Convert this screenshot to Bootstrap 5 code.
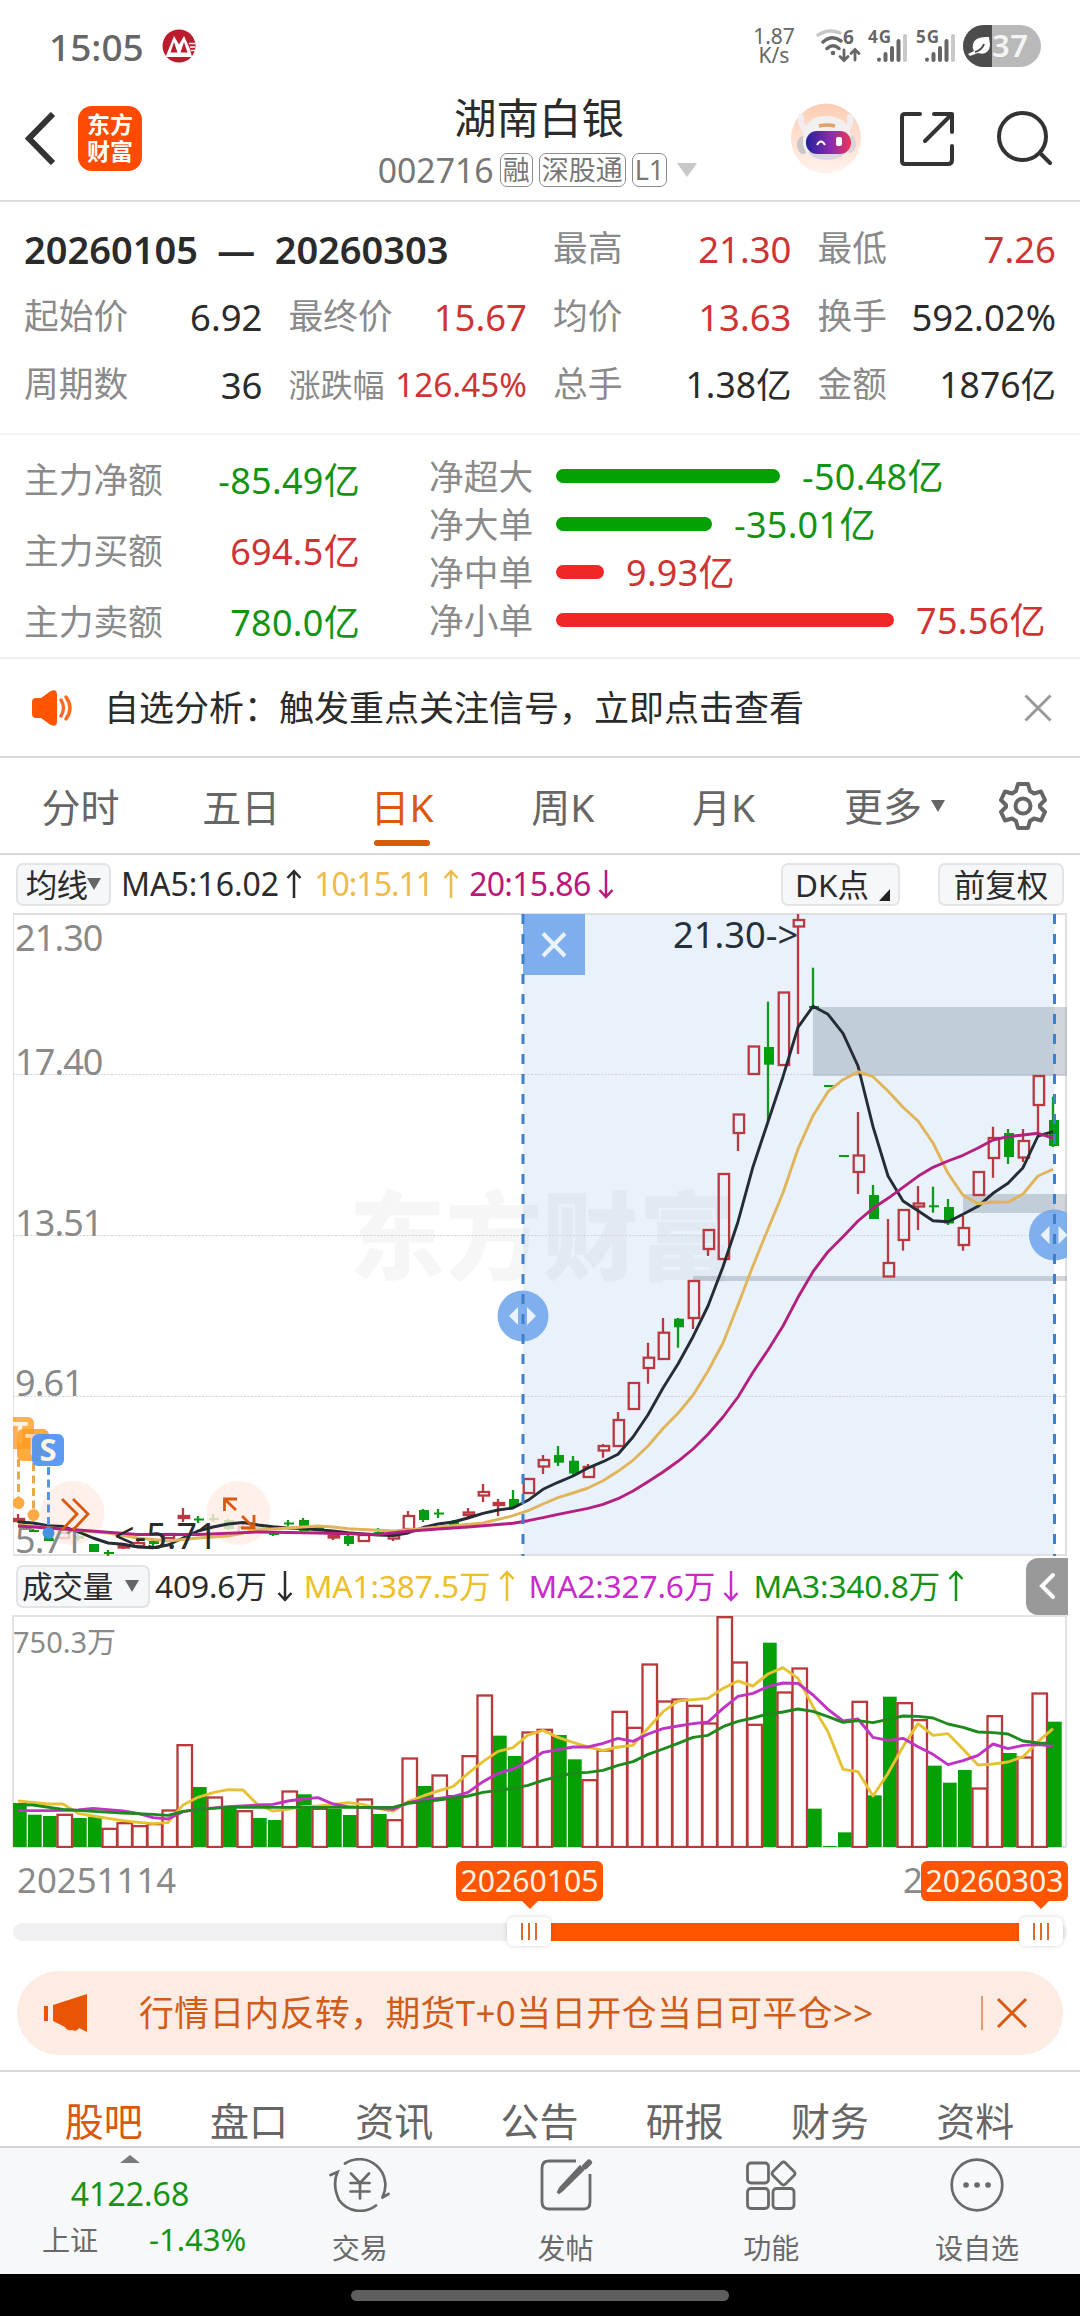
<!DOCTYPE html>
<html lang="zh-CN">
<head>
<meta charset="utf-8">
<meta name="viewport" content="width=device-width, initial-scale=1">
<title>湖南白银 002716</title>
<link href="https://cdn.jsdelivr.net/npm/bootstrap@5.3.0/dist/css/bootstrap.min.css" rel="stylesheet">
<style>
:root{--up:#cf3434;--down:#149414;--accent:#d9590f;--ink:#2b2b2b;--dim:#8a8a8a;--mid:#666}
body{font-family:"Noto Sans","Noto Sans CJK SC",sans-serif;color:var(--ink);background:#fff;width:1080px;margin:0;line-height:1;overflow-x:hidden}
svg{display:block;flex:none}
svg text{font-family:"Noto Sans","Noto Sans CJK SC",sans-serif}
.up{color:var(--up)}.down{color:var(--down)}
.nw{white-space:nowrap}
.statusbar{height:95px;padding:0 18px 3px 49px}
.clock{font-size:37px;color:#666;font-weight:500}
.netspeed{font-size:21px;line-height:19px;color:#666;text-align:center;width:42px}
.topnav{height:107px;border-bottom:2px solid #dcdcdc;padding:0 27px 0 25px}
.side{width:310px}
.applogo{width:64px;height:65px;border-radius:14px;background:#ff4a00;color:#fff;font-weight:700;font-size:23px;line-height:27px}
.stockname{font-size:42.500px;line-height:50px;margin-bottom:9px}
.code{font-size:33.800px;line-height:36px;color:#777}
.tagbox{border:1.5px solid #8c8c8c;border-radius:7px;font-size:27px;line-height:31px;color:#777;padding:0 2px;height:34px}
.tri{width:0;height:0;border:10.5px solid transparent;border-top:14px solid #c8c8c8;border-bottom:0}
.stats{height:233px;padding:13px 24px 0 24px;border-bottom:2px solid #f4f4f4}
.stats .row{--bs-gutter-x:26px;height:68px;align-items:center}
.stats .k,.funds .k{font-size:34.7px;color:var(--dim)}
.stats .v{font-size:36.5px}
.stats .yi{font-size:35.5px}
.period{font-size:38px;font-weight:600;word-spacing:9.5px}
.tight .k{font-size:32px}.stats .tight .v{font-size:33.3px}
.funds{height:224px;padding:0 25px 0 24px;border-bottom:2px solid #efefef}
.flowleft{width:336px;height:213px;margin-top:10px}
.flowleft .d-flex{height:71px}
.flowleft .v,.flowright .v{font-size:36px;letter-spacing:.3px}
.flowright{margin-left:69px;margin-top:18px}
.flowright .d-flex{height:48px}
.flowright .k{width:127px}
.meter{height:14px;border-radius:7px;margin-right:22px;margin-top:-3px}
.m-up{background:#f12626}.m-down{background:#04a004}
.notice{height:99px;border-bottom:2px solid #d9d9d9;padding:0 28px 0 30px}
.notice span{font-size:35px;margin-left:30px}
.ktabs{height:97px;border-bottom:2px solid #d9d9d9;padding-right:33px}
.ktabs .ktab{width:160.8px;font-size:39px;color:#666;text-decoration:none;text-align:center;position:relative;line-height:97px;height:95px}
.ktabs .ktab.active{color:var(--accent)}
.ktabs .ktab.active::after{content:"";position:absolute;left:52px;bottom:7px;width:56px;height:6px;border-radius:3px;background:var(--accent)}
.small-tri{font-size:0;width:0;height:0;border:7px solid transparent;border-top:12px solid #666;border-bottom:0;display:inline-block}
.chip{background:#f6f7f9;border:2px solid #e2e4e8;border-radius:7px;height:43px;font-size:31.5px;line-height:39px;color:var(--ink)}
.indrow{height:58px;padding:0 16px;font-size:32px}
.volrow{height:58px;padding:2px 12px 0 16px;font-size:31.7px;letter-spacing:-.15px}
.drawer{width:42px;height:57px;background:#999;border-radius:12px 0 0 12px}
.dates{height:121px;position:relative;padding:12px 17px 0}
.dates .d0{font-size:34.8px;line-height:40px;color:#8a8a8a}
.dates .d1{width:160px}
.flag{position:absolute;top:13px;width:147px;height:40px;border-radius:6px;background:#f50;color:#fff3e6;font-size:30.2px;line-height:40px;text-align:center}
.flag::after{content:"";position:absolute;top:40px;border:8px solid transparent;border-top:8px solid #f50;border-bottom:0}
.flag.a{left:456px}.flag.a::after{left:66px}
.flag.b{left:921px}.flag.b::after{left:112px}
.rail{position:absolute;left:13px;top:75px;width:1054px;height:18px;border-radius:9px;background:#f0f0f2}
.rail i{position:absolute;left:516px;width:510px;height:18px;background:#f50}
.knob{position:absolute;top:-6px;width:44px;height:29px;border-radius:7px;background:#fff;box-shadow:0 0 5px rgba(0,0,0,.16);gap:4.5px}
.knob b{width:2.5px;height:17px;background:#dd6a2a}
.promo{height:84px;margin:2px 17px 15px;border-radius:42px;background:#fcece3;padding:0 35px 0 26px;color:#d15b17}
.promo span{font-size:34.8px;margin-left:52px;letter-spacing:.4px}
.sections{height:76px;border-top:2px solid #d9d9d9;padding:0 32px 0 31px;font-size:39px}
.sections .sec{flex:1;text-align:center;color:#666;text-decoration:none;padding-top:29px;height:74px;line-height:39px}
.sections .sec.active{color:var(--accent)}
.dock{height:128px;background:#f7f8fa;border-top:2px solid #d4d4d6;font-size:28px;color:#6a6a6a}
.dock .idx{width:257px}
.dock .item{width:205.7px;padding-top:10px}
.dock .item span{margin-top:22px}
.sysbar{height:42px;background:#000;padding-top:16px}
.sysbar div{width:378px;height:11px;border-radius:6px;background:#5e5e5e}
</style>
<script src="https://cdn.jsdelivr.net/npm/bootstrap@5.3.0/dist/js/bootstrap.bundle.min.js"></script>
</head>
<body>

<div class="statusbar d-flex align-items-center">
  <span class="clock">15:05</span>
  <svg style="margin-left:18px" width="34" height="34" viewBox="0 0 34 34"><circle cx="17" cy="17" r="16.5" fill="#bd1a2d"/><path d="M3.500 28L12 7L17 15.500L22 7L28 20L30 28Z" fill="#fff"/><path d="M8.500 23.500L12 13L15.500 23.500ZM18.500 23.500L22 13L25.500 23.500Z" fill="#bd1a2d"/><path d="M27 14.500h6M28 18h5M29 21.500h4" stroke="#fff" stroke-width="1.400"/></svg>
  <div class="netspeed ms-auto">1.87<br>K/s</div>
  <svg style="margin-left:17px" width="250" height="50" viewBox="812 22 250 50">
    <g fill="none" stroke-linecap="round" stroke-width="3.500">
      <path d="M818 36Q829 29 840 34" stroke="#c8c8c8"/>
      <path d="M823 43Q832 35 841 42M827 49.500Q833 44 839 49.500" stroke="#666"/>
      <path d="M844 51v10M840 57.500l4 4l4-4M855 61v-10M851 54.500l4-4l4 4" stroke="#666" stroke-width="2.800"/>
    </g>
    <circle cx="833" cy="54" r="2.300" fill="#666"/>
    <text x="843" y="45" font-size="19" font-weight="700" fill="#666">6</text>
    <text x="868" y="44" font-size="17" font-weight="700" fill="#666" textLength="23">4G</text>
    <text x="916" y="44" font-size="17" font-weight="700" fill="#666" textLength="23">5G</text>
    <g stroke="#666" stroke-width="4" stroke-linecap="round"><path d="M879 60.500v.2M885.500 55v6M892 49v12M898.500 42v19M927 60.500v.2M933.500 55v6M940 49v12M946.500 42v19"/><path d="M905 37v24M953 37v24" stroke="#c8c8c8"/></g>
    <rect x="963" y="26" width="78" height="42" rx="21" fill="#b9b9b9"/>
    <path d="M992 26h-8a21 21 0 0 0 0 42h8z" fill="#4c4c4c"/>
    <path d="M989 38Q975 37 973 45Q972 49 974 52L968 55L970 57L978 54Q989 57 990 46Z" fill="#fff"/><path d="M975 53Q982 51 984 45" stroke="#4c4c4c" stroke-width="2" fill="none"/>
    <text x="992" y="58" font-size="31" font-weight="600" fill="#f4f4f4" textLength="36">37</text>
  </svg>
</div>

<header class="topnav d-flex align-items-center justify-content-between">
  <div class="side d-flex align-items-center" style="margin-top:-19px">
    <svg width="31" height="53" viewBox="0 0 31 53"><path d="M28 2L4 26.500L28 51" fill="none" stroke="#333" stroke-width="6"/></svg>
    <div class="applogo d-flex flex-column justify-content-center text-center" style="margin-left:22px"><span>东方</span><span>财富</span></div>
  </div>
  <div class="d-flex flex-column align-items-center" style="margin-top:-15px">
    <div class="stockname">湖南白银</div>
    <div class="d-flex align-items-center nw" style="gap:6px;margin-left:-3px"><span class="code">002716</span><span class="tagbox">融</span><span class="tagbox">深股通</span><span class="tagbox">L1</span><span class="tri" style="margin-left:4px"></span></div>
  </div>
  <svg style="margin-top:-20px" width="310" height="72" viewBox="743 101 310 72">
    <defs><linearGradient id="halo" x2="0" y2="1"><stop stop-color="#fdccb4"/><stop offset="1" stop-color="#fff3ed"/></linearGradient><linearGradient id="visor"><stop stop-color="#25209a"/><stop offset=".55" stop-color="#8a2bb0"/><stop offset="1" stop-color="#ef3556"/></linearGradient></defs>
    <circle cx="826" cy="137.500" r="35" fill="url(#halo)"/>
    <path d="M801 116Q800 125 807 131M850 116Q852 125 844 131" stroke="#f3edf0" stroke-width="6" fill="none" stroke-linecap="round"/>
    <ellipse cx="803" cy="144" rx="6" ry="9" fill="#c9c6c9"/><ellipse cx="850" cy="143" rx="6" ry="9" fill="#dad5da"/>
    <path d="M803 138Q804 115 826 115Q849 115 851 138Q852 159 826 159Q802 159 803 138Z" fill="#f2eff1"/><path d="M808 151Q814 159 826 159Q840 159 846 151Z" fill="#d9d6da"/>
    <rect x="806" y="130" width="45" height="23" rx="11" fill="url(#visor)"/>
    <path d="M817 144q4-7 8 0" stroke="#fff" stroke-width="2" fill="none"/><rect x="836" y="136" width="6" height="9" rx="2" fill="#fff"/><path d="M819 125q8-2 16 0" stroke="#e2a066" stroke-width="3.500" fill="none"/>
    <g fill="none" stroke="#333" stroke-width="4" stroke-linecap="round" stroke-linejoin="round"><path d="M920 113H905Q902 113 902 116V160Q902 163 905 163H948Q952 163 952 159V145M934 113H952V131M951 114L925 140"/><circle cx="1022.500" cy="135.500" r="23.500"/><path d="M1040 152L1050 162"/></g>
  </svg>
</header>

<section class="stats">
  <div class="row"><div class="col-6 period nw">20260105 — 20260303</div><div class="col-3 d-flex justify-content-between"><span class="k">最高</span><span class="v up">21.30</span></div><div class="col-3 d-flex justify-content-between"><span class="k">最低</span><span class="v up">7.26</span></div></div>
  <div class="row"><div class="col-3 d-flex justify-content-between"><span class="k">起始价</span><span class="v">6.92</span></div><div class="col-3 d-flex justify-content-between"><span class="k">最终价</span><span class="v up">15.67</span></div><div class="col-3 d-flex justify-content-between"><span class="k">均价</span><span class="v up">13.63</span></div><div class="col-3 d-flex justify-content-between"><span class="k">换手</span><span class="v">592.02%</span></div></div>
  <div class="row"><div class="col-3 d-flex justify-content-between"><span class="k">周期数</span><span class="v">36</span></div><div class="col-3 d-flex justify-content-between align-items-center tight"><span class="k">涨跌幅</span><span class="v up">126.45%</span></div><div class="col-3 d-flex justify-content-between"><span class="k">总手</span><span class="v yi">1.38亿</span></div><div class="col-3 d-flex justify-content-between"><span class="k">金额</span><span class="v yi">1876亿</span></div></div>
</section>

<section class="funds d-flex">
  <div class="flowleft">
    <div class="d-flex align-items-center justify-content-between"><span class="k">主力净额</span><span class="v down">-85.49亿</span></div>
    <div class="d-flex align-items-center justify-content-between"><span class="k">主力买额</span><span class="v up">694.5亿</span></div>
    <div class="d-flex align-items-center justify-content-between"><span class="k">主力卖额</span><span class="v down">780.0亿</span></div>
  </div>
  <div class="flowright">
    <div class="d-flex align-items-center"><span class="k">净超大</span><div class="meter m-down" style="width:224px"></div><span class="v down">-50.48亿</span></div>
    <div class="d-flex align-items-center"><span class="k">净大单</span><div class="meter m-down" style="width:156px"></div><span class="v down">-35.01亿</span></div>
    <div class="d-flex align-items-center"><span class="k">净中单</span><div class="meter m-up" style="width:48px"></div><span class="v up">9.93亿</span></div>
    <div class="d-flex align-items-center"><span class="k">净小单</span><div class="meter m-up" style="width:338px"></div><span class="v up">75.56亿</span></div>
  </div>
</section>

<section class="notice d-flex align-items-center">
  <svg width="44" height="36" viewBox="0 0 44 36"><path d="M2 12Q2 8 6 8H11L20 1.500Q27-2 27 5V31Q27 38 20 34.500L11 28H6Q2 28 2 24Z" fill="#ff5500"/><path d="M31 10Q36 18 31 26M36 7Q44 18 36 29" stroke="#ff6a1f" stroke-width="3.400" fill="none" stroke-linecap="round"/></svg>
  <span class="nw">自选分析：触发重点关注信号，立即点击查看</span>
  <svg class="ms-auto" width="28" height="28" viewBox="0 0 28 28"><path d="M1.500 1.500L26.500 26.500M26.500 1.500L1.500 26.500" stroke="#999" stroke-width="3"/></svg>
</section>

<nav class="ktabs d-flex align-items-center nw">
  <a class="ktab">分时</a><a class="ktab">五日</a><a class="ktab active">日K</a><a class="ktab">周K</a><a class="ktab">月K</a><a class="ktab d-flex align-items-center justify-content-center" style="padding-left:20px">更多<i class="small-tri" style="margin-left:9px"></i></a>
  <svg class="ms-auto" width="48" height="50" viewBox="-24 -25 48 50" fill="none" stroke="#666" stroke-width="4" stroke-linejoin="round"><path d="M-5-22H5L7-15L11-12.500L18-14.500L22-6L17-1V1L22 6L18 14.500L11 12.500L7 15L5 22H-5L-7 15L-11 12.500L-18 14.500L-22 6L-17 1V-1L-22-6L-18-14.500L-11-12.500L-7-15Z"/><circle r="7.500"/></svg>
</nav>

<div class="indrow d-flex align-items-center nw">
  <div class="chip d-flex align-items-center justify-content-center" style="width:95px;letter-spacing:-.7px">均线<i class="small-tri"></i></div>
  <span style="margin-left:10px">MA5:16.02</span><svg style="margin-left:7px" width="16" height="30" viewBox="0 0 16 30"><path d="M8 29V2M1.500 9L8 2L14.500 9" fill="none" stroke="#2b2b2b" stroke-width="2.500"/></svg>
  <span style="margin-left:12px;color:#eebb4d;letter-spacing:-1px">10:15.11</span><svg style="margin-left:10px" width="16" height="30" viewBox="0 0 16 30"><path d="M8 29V2M1.500 9L8 2L14.500 9" fill="none" stroke="#eebb4d" stroke-width="2.500"/></svg>
  <span style="margin-left:10px;color:#b8197b;letter-spacing:-.7px">20:15.86</span><svg style="margin-left:7px" width="16" height="30" viewBox="0 0 16 30"><path d="M8 1V28M1.500 21L8 28L14.500 21" fill="none" stroke="#b8197b" stroke-width="2.500"/></svg>
  <div class="chip ms-auto d-flex" style="width:119px;padding-left:12px">DK点<svg style="margin:24px 0 0 9px" width="12" height="12"><path d="M12 0V12H1Z" fill="#222"/></svg></div>
  <div class="chip text-center" style="width:126px;margin-left:38px">前复权</div>
</div>

<svg id="kline" width="1080" height="643" viewBox="0 913 1080 643"></svg>

<div class="volrow d-flex align-items-center nw">
  <div class="chip d-flex align-items-center" style="width:134px;padding-left:4px;font-size:30.5px">成交量<i class="small-tri" style="margin-left:12px"></i></div>
  <span style="margin-left:5px">409.6万</span><svg style="margin-left:10px" width="16" height="32" viewBox="0 0 16 32"><path d="M8 1V30M1.500 23L8 30L14.500 23" fill="none" stroke="#2b2b2b" stroke-width="2.500"/></svg>
  <span style="margin-left:11px;color:#ecc029">MA1:387.5万</span><svg style="margin-left:8px" width="16" height="32" viewBox="0 0 16 32"><path d="M8 31V2M1.500 9L8 2L14.500 9" fill="none" stroke="#ecc029" stroke-width="2.500"/></svg>
  <span style="margin-left:14px;color:#c92bcb">MA2:327.6万</span><svg style="margin-left:8px" width="16" height="32" viewBox="0 0 16 32"><path d="M8 1V30M1.500 23L8 30L14.500 23" fill="none" stroke="#c92bcb" stroke-width="2.500"/></svg>
  <span style="margin-left:14px;color:#149414">MA3:340.8万</span><svg style="margin-left:8px" width="16" height="32" viewBox="0 0 16 32"><path d="M8 31V2M1.500 9L8 2L14.500 9" fill="none" stroke="#149414" stroke-width="2.500"/></svg>
  <div class="drawer ms-auto d-flex align-items-center justify-content-center"><svg width="18" height="28" viewBox="0 0 18 28"><path d="M15 3L4 14L15 25" fill="none" stroke="#fff" stroke-width="4" stroke-linecap="round"/></svg></div>
</div>

<svg id="volume" width="1080" height="234" viewBox="0 1614 1080 234"></svg>

<div class="dates d-flex justify-content-between align-items-start">
  <span class="d0">20251114</span>
  <span class="d0 d1">2</span>
  <div class="flag a">20260105</div><div class="flag b">20260303</div>
  <div class="rail"><i></i>
    <div class="knob d-flex align-items-center justify-content-center" style="left:494px"><b></b><b></b><b></b></div>
    <div class="knob d-flex align-items-center justify-content-center" style="left:1006px"><b></b><b></b><b></b></div>
  </div>
</div>

<div class="promo d-flex align-items-center nw">
  <svg width="44" height="38" viewBox="0 0 44 38" fill="#e95504"><path d="M1 12H5V27H1ZM10 11L44 0V38L36 34Q34 38 29 36Q24 37 22 33L10 27Z"/></svg>
  <span>行情日内反转，期货T+0当日开仓当日可平仓&gt;&gt;</span>
  <svg class="ms-auto" width="48" height="36" viewBox="0 0 48 36"><path d="M2 1V35" stroke="#d9814d" stroke-width="1.500"/><path d="M18 4L46 32M46 4L18 32" stroke="#d9590f" stroke-width="3"/></svg>
</div>

<nav class="sections d-flex"><a class="sec active">股吧</a><a class="sec">盘口</a><a class="sec">资讯</a><a class="sec">公告</a><a class="sec">研报</a><a class="sec">财务</a><a class="sec">资料</a></nav>

<footer class="dock d-flex">
  <div class="idx d-flex flex-column align-items-center">
    <svg style="margin:7px 0 0 2px" width="20" height="8"><path d="M10 0L20 8H0Z" fill="#7a7a7a"/></svg>
    <span class="down" style="font-size:32px;margin:15px 0 0 3px">4122.68</span>
    <div class="d-flex align-items-center" style="margin:14px 0 0 37px;gap:51px;align-self:flex-start"><span style="margin-left:5px">上证</span><span class="down nw" style="font-size:31px">-1.43%</span></div>
  </div>
  <div class="item d-flex flex-column align-items-center">
    <svg width="64" height="54" viewBox="-32 -27 64 54" fill="none" stroke="#6a6a6a" stroke-width="2.700" stroke-linecap="round"><path d="M-15-21.500A26 26 0 0 1 22.500 12M-29.500-10L-22.500-13Q-28 0-21 15A26 26 0 0 0 16 20.500M22.500 12.500L28.500 9M-9-11.500L0-2L9-11.500M-9.500-2H9.500M-9.500 6.500H9.500M0-2V13.500"/></svg><span>交易</span></div>
  <div class="item d-flex flex-column align-items-center">
    <svg width="54" height="54" viewBox="0 0 54 54" fill="none" stroke="#6a6a6a" stroke-width="2.800"><path d="M37 3H10Q3 3 3 10V44Q3 51 10 51H45Q51 51 51 44V16"/><path d="M43.500 12L23 32L19 35L21.500 30L41 9Z" stroke-width="3" fill="#6a6a6a"/><path d="M46 8.500L50 4.500" stroke-width="6" stroke-linecap="round"/></svg><span>发帖</span></div>
  <div class="item d-flex flex-column align-items-center">
    <svg width="54" height="54" viewBox="0 0 54 54" fill="none" stroke="#6a6a6a" stroke-width="2.800" stroke-linejoin="round"><rect x="3.500" y="5" width="21" height="20" rx="3.500"/><rect x="3.500" y="30.500" width="21" height="20" rx="3.500"/><rect x="29" y="30.500" width="21" height="20" rx="3.500"/><path d="M37.500 5Q39.500 3 41.500 5L50 13.500Q52 15.500 50 17.500L41.500 26Q39.500 28 37.500 26L29 17.500Q27 15.500 29 13.500Z"/></svg><span>功能</span></div>
  <div class="item d-flex flex-column align-items-center">
    <svg width="54" height="54" viewBox="0 0 54 54"><circle cx="27" cy="27" r="25.300" fill="none" stroke="#6a6a6a" stroke-width="2.700"/><path d="M16 27h.1M27 27h.1M38 27h.1" stroke="#6a6a6a" stroke-width="5.600" stroke-linecap="round"/></svg><span>设自选</span></div>
</footer>
<div class="sysbar d-flex justify-content-center"><div></div></div>

<script>
// Candles: direction, wick top, body top, body bottom, wick bottom
const candles=[
['r',1514,1519,1521,1523],['g',1529,1530,1531,1532],['g',1534,1535,1541,1541],['r',1532,1533,1538,1538],['g',1533,1536,1539,1541],['g',1544,1544,1552,1552],['g',1550,1552,1554,1557],['r',1544,1546,1547.5,1549],['r',1540,1543,1546,1546],['g',1540,1541,1544,1546],
['r',1533,1534,1538,1539],['r',1508,1516,1518,1522],['g',1516,1518.5,1520.5,1523],['g',1514,1518,1520,1522],['g',1519,1520,1529,1530],['r',1524,1527,1532,1534],['g',1527,1527,1529,1529],['g',1531,1532,1535,1536],['g',1520,1522.5,1524.5,1526],['g',1518,1520,1531,1531],
['g',1525,1526,1529,1530],['r',1535,1535.5,1537.5,1540],['g',1534,1536,1544,1546],['r',1535,1535,1541,1541],['g',1528,1532,1534,1536],['r',1534,1535.5,1538.5,1541],['r',1511,1516,1529,1529],['g',1509,1510,1520,1522],['g',1509,1512.5,1514,1518],['g',1520,1522,1525,1527],
['r',1508,1512.5,1515,1517],['r',1484,1492,1495.5,1502],['r',1499,1503,1505,1516],['g',1490,1499,1507,1508],['r',1478,1479,1493,1493],['r',1455,1460,1466.5,1474],['g',1446,1455,1462.7,1466],['g',1456,1460.7,1473.5,1475],['r',1464,1467,1477,1477],['r',1444,1446,1450.5,1457.7],
['r',1412,1420,1446,1446],['r',1383,1383,1409,1409],['r',1342.7,1357.7,1368,1383.7],['r',1318,1332.7,1359,1359],['g',1318,1318.7,1327.3,1347.7],['r',1281,1281,1318,1329],['r',1229.7,1230,1249,1256],['r',1174,1174,1259,1259],['r',1114,1114.5,1133,1151],['r',1046,1046.5,1074,1074],
['g',1001.7,1047,1064.7,1121],['r',992,992.5,1065,1065],['r',914,920,926.5,1054],['g',967.7,1006,1008,1008],['g',1085,1085,1087,1087],['g',1155,1155,1157,1157],['r',1112,1155.5,1172,1194],['g',1185,1195,1219,1219],['r',1219,1263,1276.5,1276.5],['r',1210,1210,1240,1250.7],
['r',1186,1203.500,1206.500,1230],['g',1186.7,1205.3,1207,1212.7],['g',1199,1207,1223.5,1225],['r',1216,1228,1245,1250.7],['r',1172,1172,1195,1195],['r',1126.7,1138,1158,1177.7],['g',1129,1133,1157,1164],['r',1129,1141,1157.5,1162],['r',1076,1076,1105,1134],['g',1096.7,1120,1146,1147]];
const ma5=[1522,1523,1525.7,1526.5,1531.7,1538,1543,1544.3,1547,1547.7,1545,1538,1531,1527,1524,1522.5,1525,1526.7,1528,1528.5,1529.7,1531,1532.7,1534,1535,1535.5,1533,1527.5,1524,1522,1518,1513.3,1510,1508,1500.3,1489.3,1482.3,1476,1468,1461.7,1454.3,1437,1414.7,1388,1364,1336.7,1306,1266.7,1221.7,1166.7,1121.7,1076.7,1027.3,1006.3,1014.3,1033.3,1066,1126.7,1176,1201,1210.7,1220.7,1221.7,1214.3,1206.3,1193.3,1183.3,1167.7,1136,1131.7];
const ma10=[[0,1525],[3,1529],[6,1533],[8,1538],[10,1541],[12,1538],[14,1536],[16,1530],[18,1528],[20,1526],[21,1527],[22,1528.7],[25,1531],[27,1528.5],[31,1523],[32,1519.3],[33,1515.7],[34,1510.7],[35,1504],[36,1497.7],[37,1493],[38,1488],[39,1480.7],[40,1471.3],[41,1460.3],[42,1446],[43,1428.5],[44,1413.3],[45,1395.3],[46,1371],[47,1343],[48,1305],[49,1265.7],[50,1229],[51,1192.7],[52,1149],[53,1115.7],[54,1091.7],[55,1079.7],[56,1071.7],[57,1076.7],[58,1091],[59,1107.3],[60,1121],[61,1143],[62,1173.3],[63,1195.3],[64,1203.7],[65,1202],[66,1202.3],[67,1194],[68,1176],[69,1169.3]];
const ma20=[[0,1526],[4,1530],[8,1534.5],[12,1534.5],[16,1532],[20,1533],[24,1534.5],[26,1531.3],[28,1529],[30,1527],[33,1523.3],[34,1520.7],[35,1517.7],[36,1514.3],[37,1511.3],[38,1508.3],[39,1504.3],[40,1498.7],[41,1491],[42,1481.7],[43,1472],[44,1461.3],[45,1449],[46,1434.3],[47,1417],[48,1397],[49,1372.3],[50,1350],[51,1326],[52,1297.3],[53,1271.7],[54,1251.7],[55,1236.7],[56,1221],[57,1208.3],[58,1198.3],[59,1187.3],[60,1176.3],[61,1167.3],[62,1161],[63,1155.3],[64,1148],[65,1140],[66,1136.7],[67,1135],[68,1133.3],[69,1138]];
const px=i=>18+15*i;
const line=(pts,c,w=2.9)=>`<polyline fill="none" stroke="${c}" stroke-width="${w}" stroke-linejoin="round" points="${pts.map(p=>px(p[0])+','+p[1]).join(' ')}"/>`;
let s='<defs><clipPath id="plot"><rect x="13" y="913" width="1054" height="643"/></clipPath></defs><g clip-path="url(#plot)">';
s+='<text x="349" y="1272" font-size="96" font-weight="900" fill="#f6f6f6" textLength="386">东方财富</text>';
s+='<rect x="523" y="914" width="531.500" height="642" fill="#4a90e2" fill-opacity=".12"/>';
s+='<path d="M13 914H1066V1555H13Z" fill="none" stroke="#dfe0e2" stroke-width="2"/>';
[1074.500,1235.500,1396.500].forEach(y=>s+=`<path d="M13 ${y}H1066" stroke="#cfd3d8" stroke-width="1.200" stroke-dasharray="2 1.500"/>`);
s+='<g fill="#7b8a9e" fill-opacity=".35"><rect x="813" y="1007" width="254" height="69"/><rect x="963" y="1194" width="104" height="19"/><rect x="693" y="1276" width="374" height="5"/></g>';
candles.forEach((k,i)=>{const x=px(i),[d,a,b,c,e]=k;
 if(d=='r')s+=`<path d="M${x} ${a}V${b}M${x} ${c}V${e}" stroke="#b83a40" stroke-width="2.300"/><rect x="${x-4.3}" y="${b}" width="10.400" height="${c-b}" fill="none" stroke="#b83a40" stroke-width="2.300"/>`;
 else s+=`<path d="M${x} ${a}V${e}" stroke="#109820" stroke-width="2.300"/><rect x="${x-4}" y="${b}" width="10" height="${Math.max(2,c-b)}" fill="#069c12"/>`;});
s+='<circle cx="72.500" cy="1513" r="32" fill="#ffece3" fill-opacity=".8"/><circle cx="238.500" cy="1513" r="32" fill="#ffece3" fill-opacity=".8"/>';
s+='<g fill="#8a8a8a" font-size="36" letter-spacing="-.9">'+[['21.30',951],['17.40',1075],['13.51',1236],['9.61',1396],['5.71',1553]].map(t=>`<text x="15" y="${t[1]}">${t[0]}</text>`).join('')+'</g>';
s+=line(ma5.map((y,i)=>[i,y]),'#242d35')+line(ma10,'#e0b45a')+line(ma20,'#b4207f');
s+='<g fill="none" stroke="#d9590f" stroke-width="2.800"><path d="M62 1499L77 1514L62 1530M73 1499L88 1514L73 1530M236 1510L224.500 1499M224.500 1511V1499H237M242 1516L254 1528M254 1515V1528H241"/></g>';
s+='<text x="673" y="948" font-size="36.300" fill="#26303a">21.30-&gt;</text><text x="114" y="1548.500" font-size="36" fill="#2b2b2b">&lt;-5.71</text>';
s+='<g stroke-width="3" stroke-dasharray="8 4.500"><path d="M18.500 1459V1502M33.500 1463V1514" stroke="#e9a84b"/><path d="M48.500 1467V1530" stroke="#5a95e0"/></g><circle cx="18.500" cy="1503" r="6" fill="#ffab45"/><circle cx="33.500" cy="1515" r="6" fill="#ffab45"/><circle cx="48.500" cy="1533" r="6" fill="#4a8fe0"/>';
s+='<g font-weight="700" font-size="28" text-anchor="middle" fill="#fff3e6"><rect x="2" y="1417" width="32" height="32" rx="6" fill="#ffa32e" fill-opacity=".85"/><text x="20" y="1443">T</text><rect x="17" y="1429" width="32" height="32" rx="6" fill="#ff9c22" fill-opacity=".85"/><text x="33" y="1455" fill-opacity=".7">T</text><rect x="32" y="1434" width="32" height="32" rx="6" fill="#4d93f2" fill-opacity=".92"/><text x="48" y="1461" font-size="31">S</text></g>';
s+='<rect x="523" y="914" width="62" height="61" fill="#7eaeed"/><path d="M543 933.500L565 956M565 933.500L543 956" stroke="#eaf3fc" stroke-width="4"/>';
const grip=(x,y)=>`<circle cx="${x}" cy="${y}" r="25.500" fill="#6fa5ec" fill-opacity=".88"/><path d="M${x-5} ${y-9}V${y+9}L${x-14} ${y}ZM${x+4} ${y-9}V${y+9}L${x+13} ${y}Z" fill="#eaf3fc"/>`;
s+=grip(523,1316)+grip(1054.500,1235);
s+='<path d="M523 914V1556M1054.500 914V1556" stroke="#3f80cb" stroke-width="3" stroke-dasharray="10 10"/></g>';
document.getElementById('kline').innerHTML=s;

// Volume bars: direction and height of the top edge
const vol='g609 g644 g648 r643 g654 g651 r685 r668 r677 r671 r630 r434 g561 r591 g620 r632 g654 g660 r573 g583 r625 g627 g645 r597 g642 r659 r474 g558 r525 g585 r467 r285 g407 g468 r396 r388 g405 g478 r539 r450 r334 r382 r192 r303 r297 r316 r369 r50 r186 r373 g128 r276 r204 g626 g738 g697 r304 g586 g290 r308 r359 g497 g548 g510 r564 r347 g459 r471 r279 g365'.split(' ');
const vy=v=>1600+v/3;
let v='<path d="M13 1616H1066V1847H13Z" fill="none" stroke="#e3e3e3" stroke-width="2"/><text x="13" y="1653" font-size="29" fill="#8a8a8a">750.3万</text>';
vol.forEach((t,i)=>{const y=vy(+t.slice(1)),x=13+15*i;
 v+=t[0]=='g'?`<rect x="${x}" y="${y}" width="13.700" height="${1847-y}" fill="#04a004"/>`:`<rect x="${x-.5}" y="${y+.5}" width="14.500" height="${1846.500-y}" fill="#fff" stroke="#b83a3a" stroke-width="2.300"/>`;});
const seq=o=>o.map((p,i)=>Array.isArray(p)?[p[0],vy(p[1])]:[i,vy(p)]);
v+=line(seq([603,607,612,612,640,648,655,662,667,671,668,615,592,578,569,570,615,633,628,620,618,613,608,613,625,634,605,588,573,560,520,485,454,443,405,391,412,427,441,451,441,436,385,335,303,299,295,265,243,258,222,203,235,320,395,508,515,588,520,440,371,406,401,447,495,492,486,470,425,386]),'#e6c233');
v+=line(seq([[0,632],[2,632],[4,630],[5,625],[7,633],[8,640],[9,653],[10,657],[11,635],[12,628],[14,620],[16,615],[17,613],[18,603],[19,597],[20,593],[21,612],[22,620],[24,625],[25,628],[26,608],[27,600],[28,595],[29,590],[30,577],[31,545],[32,520],[33,507],[34,485],[35,457],[37,441],[38,441],[39,430],[40,415],[41,424],[42,402],[43,386],[44,378],[45,371],[46,366],[47,325],[48,289],[49,280],[50,260],[51,249],[52,250],[53,285],[54,328],[55,363],[56,357],[57,412],[58,421],[59,415],[60,440],[61,463],[62,494],[63,482],[64,466],[65,432],[66,446],[67,436],[68,434],[69,438]]),'#c034c4');
v+=line(seq([[0,614],[1,615],[3,628],[5,634],[7,639],[9,643],[10,646],[11,634],[12,628],[14,622],[18,622],[25,622],[26,610],[28,600],[30,588],[31,577],[33,565],[34,556],[35,541],[36,530],[37,519],[38,517],[39,511],[40,496],[41,485],[42,463],[43,447],[44,430],[45,412],[46,406],[47,380],[48,364],[49,354],[50,342],[51,336],[52,327],[53,334],[54,350],[55,367],[56,362],[57,368],[58,358],[59,348],[60,349],[61,354],[62,372],[63,382],[64,396],[65,398],[66,402],[67,423],[68,429],[69,430]]),'#1e8a1e');
document.getElementById('volume').innerHTML=v;
</script>
</body>
</html>
